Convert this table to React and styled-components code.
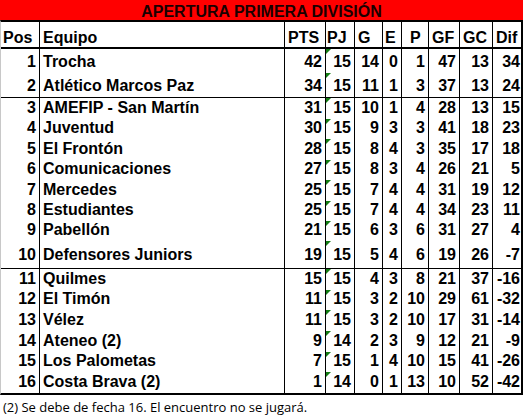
import React from 'react';
import styled, { createGlobalStyle } from 'styled-components';

const GlobalStyle = createGlobalStyle`
  body {
    margin: 0;
    background: #fff;
    font-family: "Liberation Sans", Arial, sans-serif;
  }
`;

const columns = [
  { key: 'pos', label: 'Pos', width: 39, headPad: 2, align: 'right' },
  { key: 'team', label: 'Equipo', width: 245, headPad: 3, align: 'left' },
  { key: 'pts', label: 'PTS', width: 41, headPad: 3, align: 'right' },
  { key: 'pj', label: 'PJ', width: 29, headPad: 1, align: 'right', flag: true },
  { key: 'g', label: 'G', width: 28, headPad: 3, align: 'right' },
  { key: 'e', label: 'E', width: 19, headPad: 2, align: 'right' },
  { key: 'p', label: 'P', width: 27, headPad: 8, align: 'right' },
  { key: 'gf', label: 'GF', width: 31, headPad: 3, align: 'right' },
  { key: 'gc', label: 'GC', width: 33, headPad: 3, align: 'right' },
  { key: 'dif', label: 'Dif', width: 28, headPad: 3, align: 'right', last: true },
];

const template = columns.map(c => `${c.width}px`).join(' ');

// heights per row; the taller 10th row sits its text a bit higher
const groups = [
  {
    heights: [24, 24],
    rows: [
      [1, 'Trocha', 42, 15, 14, 0, 1, 47, 13, 34],
      [2, 'Atlético Marcos Paz', 34, 15, 11, 1, 3, 37, 13, 24],
    ],
  },
  {
    heights: [21, 20, 21, 20, 21, 20, 20, 27],
    rows: [
      [3, 'AMEFIP - San Martín', 31, 15, 10, 1, 4, 28, 13, 15],
      [4, 'Juventud', 30, 15, 9, 3, 3, 41, 18, 23],
      [5, 'El Frontón', 28, 15, 8, 4, 3, 35, 17, 18],
      [6, 'Comunicaciones', 27, 15, 8, 3, 4, 26, 21, 5],
      [7, 'Mercedes', 25, 15, 7, 4, 4, 31, 19, 12],
      [8, 'Estudiantes', 25, 15, 7, 4, 4, 34, 23, 11],
      [9, 'Pabellón', 21, 15, 6, 3, 6, 31, 27, 4],
      [10, 'Defensores Juniors', 19, 15, 5, 4, 6, 19, 26, -7],
    ],
  },
  {
    heights: [21, 20, 21, 21, 20, 21],
    rows: [
      [11, 'Quilmes', 15, 15, 4, 3, 8, 21, 37, -16],
      [12, 'El Timón', 11, 15, 3, 2, 10, 29, 61, -32],
      [13, 'Vélez', 11, 15, 3, 2, 10, 17, 31, -14],
      [14, 'Ateneo (2)', 9, 14, 2, 3, 9, 12, 21, -9],
      [15, 'Los Palometas', 7, 15, 1, 4, 10, 15, 41, -26],
      [16, 'Costa Brava (2)', 1, 14, 0, 1, 13, 10, 52, -42],
    ],
  },
];

const Sheet = styled.div`
  width: 523px;
  color: #000;
`;

const Title = styled.div`
  height: 20px;
  background: #ff0000;
  display: flex;
  align-items: flex-end;
  justify-content: center;
  font-weight: bold;
  font-size: 16px;
  line-height: 17px;
  color: #1a0000;
`;

const Table = styled.div`
  border-top: 2px solid #000;
  border-left: 1px solid #c8c8c8;
  border-right: 2px solid #000;
  border-bottom: 2px solid #000;
`;

const Row = styled.div`
  display: grid;
  grid-template-columns: ${template};
  height: ${p => p.h}px;
  font-weight: bold;
  font-size: 16px;
  line-height: 17px;
`;

const HeaderRow = styled(Row)`
  border-bottom: 2px solid #000;
`;

const Group = styled.div`
  & + & {
    border-top: 1px solid #000;
  }
`;

const Cell = styled.div`
  position: relative;
  display: flex;
  align-items: flex-end;
  justify-content: ${p => (p.align === 'right' ? 'flex-end' : 'flex-start')};
  padding: 0 ${p => (p.last ? 1 : 3)}px ${p => p.pb}px ${p => (p.align === 'left' ? 3 : 0)}px;
  border-right: ${p => (p.last ? 'none' : '1px solid #000')};
  white-space: nowrap;
  overflow: hidden;
`;

const HeadCell = styled(Cell)`
  justify-content: flex-start;
  padding: 0 0 1px ${p => p.pad}px;
`;

const Flag = styled.span`
  position: absolute;
  top: 0;
  left: 0;
  width: 0;
  height: 0;
  border-top: 5px solid #137d13;
  border-right: 5px solid transparent;
`;

const Footnote = styled.div`
  height: 21px;
  padding: 3px 0 0 3px;
  box-sizing: border-box;
  display: flex;
  align-items: center;
  font-family: "Open Sans", "Noto Sans", sans-serif;
  font-size: 13px;
  color: #000;
`;

const App = () => (
  <>
    <GlobalStyle />
    <Sheet>
      <Title>APERTURA PRIMERA DIVISIÓN</Title>
      <Table>
        <HeaderRow h={25}>
          {columns.map(c => (
            <HeadCell key={c.key} pad={c.headPad} last={c.last}>
              {c.label}
            </HeadCell>
          ))}
        </HeaderRow>
        {groups.map((group, gi) => (
          <Group key={gi}>
            {group.rows.map((row, ri) => {
              const h = group.heights[ri];
              const pb = h > 25 ? 5 : 3;
              return (
                <Row key={row[0]} h={h}>
                  {columns.map((c, ci) => (
                    <Cell key={c.key} align={c.align} last={c.last} pb={pb}>
                      {c.flag && <Flag />}
                      {row[ci]}
                    </Cell>
                  ))}
                </Row>
              );
            })}
          </Group>
        ))}
      </Table>
      <Footnote>(2) Se debe de fecha 16. El encuentro no se jugará.</Footnote>
    </Sheet>
  </>
);

export default App;
